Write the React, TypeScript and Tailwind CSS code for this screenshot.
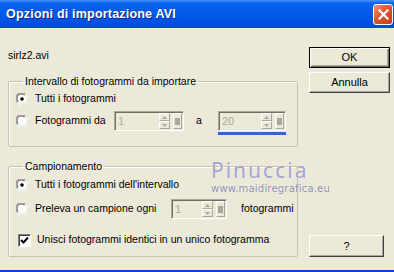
import React from 'react';

const face = 'bg-[#ECE9D8]';

function Radio({ checked }: { checked?: boolean }) {
  return (
    <svg width="12" height="12" viewBox="0 0 12 12" className="shrink-0">
      <circle cx="6" cy="6" r="5.5" fill="#fff" />
      <path d="M1.2 9.5 A5.5 5.5 0 0 1 9.5 1.2" stroke="#8c8a80" strokeWidth="1" fill="none" />
      <path d="M2.2 8.6 A4.3 4.3 0 0 1 8.6 2.2" stroke="#404040" strokeWidth="1" fill="none" />
      <path d="M10.8 2.5 A5.5 5.5 0 0 1 2.5 10.8" stroke="#ffffff" strokeWidth="1" fill="none" />
      <path d="M9.8 3.4 A4.3 4.3 0 0 1 3.4 9.8" stroke="#e2dfd0" strokeWidth="1" fill="none" />
      {checked && <circle cx="6" cy="6" r="1.8" fill="#000" />}
    </svg>
  );
}

function SpinBox({ value, width }: { value: string; width: string }) {
  return (
    <div className={`${width} h-[20px] flex items-center border border-t-[#aca899] border-l-[#aca899] border-r-white border-b-white shadow-[inset_1px_1px_0_#716f64]`}>
      <span className="flex-1 pl-[3px] text-[#aca899] text-[11px] leading-[14px]">{value}</span>
      <div className="flex flex-col w-[11px] h-[16px]">
        <div className="h-[8px] flex items-center justify-center border border-t-white border-l-white border-r-[#aca899] border-b-[#aca899]">
          <svg width="5" height="3" viewBox="0 0 5 3"><path d="M2.5 0 L5 3 L0 3 Z" fill="#aca899" /></svg>
        </div>
        <div className="h-[8px] flex items-center justify-center border border-t-white border-l-white border-r-[#aca899] border-b-[#aca899]">
          <svg width="5" height="3" viewBox="0 0 5 3"><path d="M0 0 L5 0 L2.5 3 Z" fill="#aca899" /></svg>
        </div>
      </div>
      <div className="ml-[3px] mr-[1px] w-[9px] h-[16px] flex items-center justify-center border border-t-white border-l-white border-r-[#aca899] border-b-[#aca899]">
        <div className="w-[5px] h-[7px] bg-[#aca899]" />
      </div>
    </div>
  );
}

function XpButton({ label, def, className }: { label: string; def?: boolean; className: string }) {
  return (
    <button
      className={`${className} ${face} text-black text-[11px] leading-none flex items-center justify-center ${
        def
          ? 'border border-black shadow-[inset_1px_1px_0_#fff,inset_-1px_-1px_0_#716f64,inset_-2px_-2px_0_#aca899]'
          : 'border border-t-white border-l-white border-r-[#404040] border-b-[#404040] shadow-[inset_-1px_-1px_0_#aca899]'
      }`}
    >
      {label}
    </button>
  );
}

export default function App() {
  return (
    <div
      className={`relative w-[394px] h-[272px] flex flex-col ${face} text-[10.5px] text-black overflow-hidden`}
      style={{ fontFamily: '"Liberation Sans", Arial, sans-serif' }}
    >
      {/* Title bar */}
      <div className="h-[28px] flex items-center justify-between pl-[6px] pr-[1px] bg-[linear-gradient(180deg,#4b91f7_0%,#0a63ee_12%,#0058e8_55%,#004ad8_100%)]">
        <span className="text-white font-bold text-[12.5px] tracking-[0.2px] [text-shadow:1px_1px_0_#0c2a86]">
          Opzioni di importazione AVI
        </span>
        <div className="w-[20px] h-[21px] rounded-[3px] border border-white bg-[linear-gradient(135deg,#f0936f_0%,#e2552f_45%,#c83c1c_100%)] flex items-center justify-center">
          <svg width="11" height="11" viewBox="0 0 11 11">
            <path d="M1.5 1.5 L9.5 9.5 M9.5 1.5 L1.5 9.5" stroke="#fff" strokeWidth="2.2" strokeLinecap="square" />
          </svg>
        </div>
      </div>

      {/* Body */}
      <div className="flex-1 flex">
        <div className="ml-[8px] w-[290px] flex flex-col">
          <div className="mt-[21px] h-[13px] leading-[13px]">sirlz2.avi</div>

          <fieldset className="mt-[13px] border border-[#c5c2b2] rounded-[2px] pl-[7px] pb-[11px] shadow-[inset_1px_1px_0_#fff]">
            <legend className="ml-[7px] px-[2px] leading-[13px]">Intervallo di fotogrammi da importare</legend>
            <div className="mt-[3px] h-[16px] flex items-center gap-[7px]">
              <Radio checked />
              <span>Tutti i fotogrammi</span>
            </div>
            <div className="mt-[4px] flex items-start">
              <div className="w-[98px] h-[20px] flex items-center gap-[7px]">
                <Radio />
                <span>Fotogrammi da</span>
              </div>
              <SpinBox value="1" width="w-[70px]" />
              <div className="w-[34px] h-[20px] pl-[12px] flex items-center">a</div>
              <div className="flex flex-col">
                <SpinBox value="20" width="w-[68px]" />
                <div className="mt-[1px] h-[3px] bg-[#316ac5]" />
              </div>
            </div>
          </fieldset>

          <fieldset className="mt-[13px] border border-[#c5c2b2] rounded-[2px] pl-[7px] pb-[8px] shadow-[inset_1px_1px_0_#fff]">
            <legend className="ml-[7px] px-[2px] leading-[13px]">Campionamento</legend>
            <div className="mt-[4px] h-[16px] flex items-center gap-[7px]">
              <Radio checked />
              <span>Tutti i fotogrammi dell'intervallo</span>
            </div>
            <div className="mt-[6px] flex items-center">
              <div className="w-[155px] h-[20px] flex items-center gap-[7px]">
                <Radio />
                <span>Preleva un campione ogni</span>
              </div>
              <SpinBox value="1" width="w-[56px]" />
              <span className="ml-[14px]">fotogrammi</span>
            </div>
            <div className="mt-[13px] h-[16px] flex items-center gap-[6px] pl-[2px]">
              <div className="w-[13px] h-[13px] bg-white border border-t-[#808080] border-l-[#808080] border-r-white border-b-white shadow-[inset_1px_1px_0_#404040] flex items-center justify-center">
                <svg width="9" height="9" viewBox="0 0 9 9">
                  <path d="M1 4 L3.5 6.5 L8 1.5" stroke="#000" strokeWidth="2" fill="none" />
                </svg>
              </div>
              <span>Unisci fotogrammi identici in un unico fotogramma</span>
            </div>
          </fieldset>
        </div>

        <div className="ml-[11px] w-[81px] flex flex-col">
          <XpButton label="OK" def className="mt-[19px] w-[81px] h-[21px]" />
          <XpButton label="Annulla" className="mt-[4px] w-[81px] h-[21px]" />
          <XpButton label="?" className="mt-[142px] w-[75px] h-[22px]" />
        </div>
      </div>

      <div className="h-[2px] bg-[#0044d0]" />

      {/* Watermark */}
      <div className="absolute left-[211px] top-[159px] flex flex-col items-start pointer-events-none">
        <span
          className="text-[21px] leading-[22px] tracking-[2px] text-[#a4a4d0] [text-shadow:0_0_1px_#fff]"
          style={{ fontFamily: '"Noto Sans", sans-serif' }}
        >
          Pinuccia
        </span>
        <span
          className="mt-[2px] text-[10px] leading-[11px] tracking-[0.2px] text-[#8f8fb0] [text-shadow:0_0_1px_#fff]"
          style={{ fontFamily: '"DejaVu Sans", sans-serif' }}
        >
          www.maidiregrafica.eu
        </span>
      </div>
    </div>
  );
}
